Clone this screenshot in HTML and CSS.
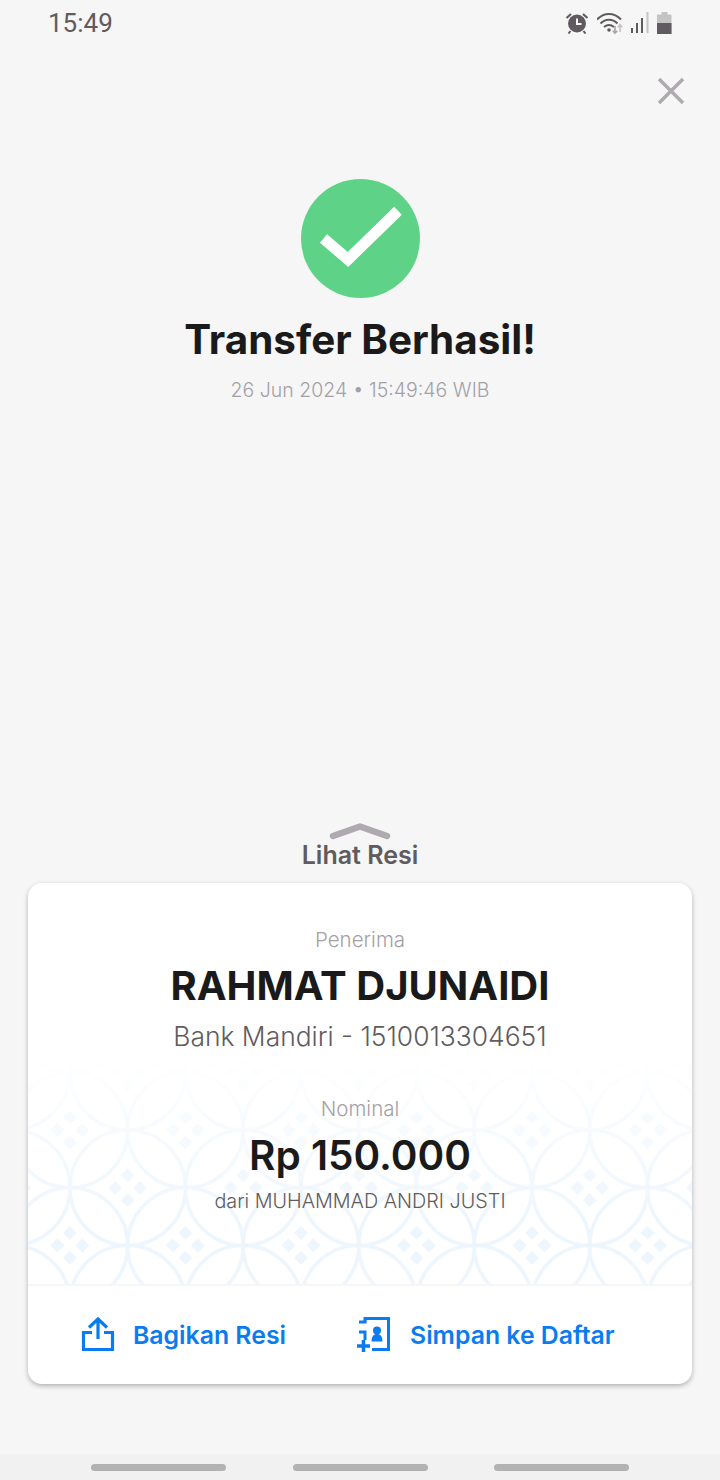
FILE: index.html
```html
<!DOCTYPE html>
<html lang="id">
<head>
  <meta charset="UTF-8">
  <meta name="viewport" content="width=device-width, initial-scale=1.0">
  <title>Transfer Berhasil</title>
  <link rel="stylesheet" href="styles.css">
</head>
<body>
  <div class="phone">
    <!-- Status bar -->
    <div class="status-bar">
      <span class="clock">15:49</span>
      <div class="status-icons">
        <svg class="icon-alarm" width="24" height="22" viewBox="0 0 24 22">
          <circle cx="12" cy="11.500" r="9" fill="#5f5b5e"/>
          <path d="M12 6.500v5.500h4.500" fill="none" stroke="#f6f6f6" stroke-width="2"/>
          <path d="M1.500 6 6 2M22.500 6 18 2M5.500 19l-2 2.500M18.500 19l2 2.500" fill="none" stroke="#5f5b5e" stroke-width="2"/>
        </svg>
        <svg class="icon-wifi" width="26" height="22" viewBox="0 0 26 22">
          <path d="M0 7.500C7 0 17 0 24 7.500M3.500 11.500c5-5 12-5 17 0M7 15c3-2.500 7-2.500 10 0" fill="none" stroke="#5f5b5e" stroke-width="2"/>
          <circle cx="12" cy="18" r="1.800" fill="#5f5b5e"/>
          <path d="M18 14v7M15.800 18.800l2.200 2.400 2.200-2.400" fill="none" stroke="#a6a6a6" stroke-width="1.600"/>
          <path d="M23 20v-7M20.800 15.200l2.200-2.400 2.200 2.400" fill="none" stroke="#c4c4c4" stroke-width="1.600"/>
        </svg>
        <svg class="icon-signal" width="18" height="21" viewBox="0 0 18 21">
          <rect x="0" y="16" width="2" height="5" fill="#5f5b5e"/>
          <rect x="5" y="11" width="2" height="10" fill="#5f5b5e"/>
          <rect x="10" y="6" width="2" height="15" fill="#5f5b5e"/>
          <rect x="15.500" y="0" width="2" height="21" fill="#c4c4c4"/>
        </svg>
        <svg class="icon-battery" width="15" height="22" viewBox="0 0 15 22">
          <path d="M4.500 0h6v2.500h3a1 1 0 0 1 1 1V22H0V3.500a1 1 0 0 1 1-1h3.500z" fill="#c4c4c4"/>
          <rect x="0" y="11" width="14.500" height="11" fill="#5f5b5e"/>
        </svg>
      </div>
    </div>

    <div class="close-row">
      <svg width="30" height="30" viewBox="0 0 30 30">
        <path d="M3 3l24 24M27 3 3 27" fill="none" stroke="#aeaab0" stroke-width="3.500"/>
      </svg>
    </div>

    <!-- Status transfer -->
    <div class="hero">
      <div class="check-circle">
        <svg width="119" height="119" viewBox="0 0 119 119">
          <path d="M22.500 59.500 47 80.500 97 31.700" fill="none" stroke="#fff" stroke-width="11"/>
        </svg>
      </div>
      <h1 class="hero-title">Transfer Berhasil!</h1>
      <p class="hero-date">26 Jun 2024 • 15:49:46 WIB</p>
    </div>

    <!-- Resi -->
    <div class="sheet">
      <div class="sheet-handle">
        <svg width="62" height="18" viewBox="0 0 62 18">
          <path d="M4 13 31 3.500 58 13" fill="none" stroke="#aeaab0" stroke-width="6.500" stroke-linecap="round" stroke-linejoin="round"/>
        </svg>
        <span class="handle-label">Lihat Resi</span>
      </div>

      <div class="card">
        <div class="card-body">
          <svg class="batik" width="664" height="230">
            <defs>
              <pattern id="kawung" width="116" height="116" patternUnits="userSpaceOnUse" patternTransform="translate(13 47) scale(0.996)">
                <g fill="none" stroke="#edf5fd" stroke-width="3.500">
                  <circle cx="29" cy="29" r="58"/>
                  <circle cx="145" cy="29" r="58"/>
                  <circle cx="29" cy="145" r="58"/>
                  <circle cx="145" cy="145" r="58"/>
                  <circle cx="87" cy="87" r="58"/>
                  <circle cx="-29" cy="87" r="58"/>
                  <circle cx="87" cy="-29" r="58"/>
                  <circle cx="-29" cy="-29" r="58"/>
                </g>
                <g fill="#edf5fd">
                  <path d="M29 9.500l7 7-7 7-7-7z"/>
                  <path d="M29 34.500l7 7-7 7-7-7z"/>
                  <path d="M16.500 22l7 7-7 7-7-7z"/>
                  <path d="M41.500 22l7 7-7 7-7-7z"/>
                  <path d="M87 67.500l7 7-7 7-7-7z"/>
                  <path d="M87 92.500l7 7-7 7-7-7z"/>
                  <path d="M74.500 80l7 7-7 7-7-7z"/>
                  <path d="M99.500 80l7 7-7 7-7-7z"/>
                </g>
              </pattern>
            </defs>
            <rect width="664" height="230" fill="url(#kawung)"/>
          </svg>

          <div class="info-block">
            <p class="info-label">Penerima</p>
            <p class="info-name">RAHMAT DJUNAIDI</p>
            <p class="info-bank">Bank Mandiri - 1510013304651</p>
          </div>
          <div class="info-block info-amount">
            <p class="info-label">Nominal</p>
            <p class="info-value">Rp 150.000</p>
            <p class="info-from">dari MUHAMMAD ANDRI JUSTI</p>
          </div>
        </div>

        <div class="card-actions">
          <button class="action action-share" type="button">
            <svg width="34" height="36" viewBox="0 0 34 36">
              <path d="M17 22V3M8 10.500 17 2l9 8.500" fill="none" stroke="#0a7cf0" stroke-width="3.200"/>
              <path d="M11 15.500H2.500V32.500H31.500V15.500H23" fill="none" stroke="#0a7cf0" stroke-width="3.200"/>
            </svg>
            Bagikan Resi
          </button>
          <button class="action action-save" type="button">
            <svg width="36" height="36" viewBox="0 0 36 36">
              <path d="M8 5V1.500H31.500V32.500H15" fill="none" stroke="#0a7cf0" stroke-width="3"/>
              <path d="M2 5H9.500M2 15H9.500M8 15V23" fill="none" stroke="#0a7cf0" stroke-width="3"/>
              <path d="M0 29H13M6.500 23V35" fill="none" stroke="#0a7cf0" stroke-width="3.500"/>
              <circle cx="20" cy="13.500" r="4" fill="#0a7cf0"/>
              <path d="M14.500 24.500c0-5 2-7.500 5.500-7.500s5.500 2.500 5.500 7.500z" fill="#0a7cf0"/>
            </svg>
            Simpan ke Daftar
          </button>
        </div>
      </div>
    </div>

    <!-- Navigasi bawah -->
    <div class="nav-bar">
      <span class="nav-pill"></span>
      <span class="nav-pill"></span>
      <span class="nav-pill"></span>
    </div>
  </div>
</body>
</html>
```

FILE: styles.css
```css
* {
  box-sizing: border-box;
}

body {
  margin: 0;
  font-family: Inter, "Noto Sans", sans-serif;
  background-color: #f6f6f6;
  color: #1a1a1a;
}

p, h1 {
  margin: 0;
}

.phone {
  display: flex;
  flex-direction: column;
  height: 1480px;
  overflow: hidden;
}

/* Status bar */
.status-bar {
  display: flex;
  justify-content: space-between;
  align-items: center;
  height: 44px;
  padding: 1px 48px 0 48px;
}

.clock {
  font-family: Roboto, sans-serif;
  font-size: 26px;
  color: #5f5b5e;
}

.status-icons {
  display: flex;
  align-items: center;
  gap: 8px;
}

.close-row {
  display: flex;
  justify-content: flex-end;
  padding: 32px 34px 0 0;
}

/* Hero */
.hero {
  display: flex;
  flex-direction: column;
  align-items: center;
  margin-top: 73px;
}

.check-circle {
  width: 119px;
  height: 119px;
  border-radius: 50%;
  background-color: #5ed387;
}

.check-circle svg {
  display: block;
}

.hero-title {
  margin-top: 17px;
  font-size: 40.400px;
  line-height: 50px;
  font-weight: 700;
}

.hero-date {
  margin-top: 12px;
  font-size: 19.500px;
  line-height: 26px;
  font-weight: 300;
  color: #a4a0a6;
}

/* Sheet */
.sheet {
  margin-top: auto;
  padding: 0 28px;
}

.sheet-handle {
  display: flex;
  flex-direction: column;
  align-items: center;
}

.handle-label {
  font-size: 25px;
  line-height: 30px;
  font-weight: 600;
  color: #5f5b5e;
  margin-top: -1px;
}

.card {
  margin-top: 13px;
  background-color: #fff;
  border-radius: 14px;
  box-shadow: 0 2px 5px rgba(0, 0, 0, 0.28);
  overflow: hidden;
}

.card-body {
  position: relative;
  height: 401px;
  padding-top: 44px;
  text-align: center;
}

.batik {
  position: absolute;
  left: 0;
  bottom: 0;
  -webkit-mask-image: linear-gradient(to bottom, transparent 0, #000 170px);
  mask-image: linear-gradient(to bottom, transparent 0, #000 170px);
}

.info-block {
  position: relative;
}

.info-amount {
  margin-top: 43px;
}

.info-label {
  font-size: 20.500px;
  line-height: 26px;
  font-weight: 300;
  color: #a4a0a6;
}

.info-name {
  margin-top: 8px;
  font-size: 40px;
  line-height: 50px;
  font-weight: 700;
}

.info-bank {
  margin-top: 8px;
  font-size: 26.400px;
  line-height: 34px;
  font-weight: 300;
  color: #5f5b5e;
}

.info-value {
  margin-top: 9px;
  font-size: 40.500px;
  line-height: 50px;
  font-weight: 600;
}

.info-from {
  margin-top: 7px;
  font-size: 19.800px;
  line-height: 26px;
  font-weight: 300;
  color: #5f5b5e;
}

.card-actions {
  display: flex;
  align-items: center;
  height: 100px;
  padding: 0 53px;
  border-top: 2px solid #f6f6f6;
}

.action {
  display: flex;
  align-items: center;
  padding: 0;
  border: none;
  background: none;
  font-family: inherit;
  font-size: 24.800px;
  font-weight: 600;
  color: #0a7cf0;
}

.action-share {
  gap: 18px;
}

.action-save {
  gap: 17px;
  margin-left: 71px;
}

/* Navigasi bawah */
.nav-bar {
  display: flex;
  justify-content: space-between;
  align-items: center;
  height: 26px;
  margin-top: 70px;
  padding: 0 91px;
  background-color: #f1f1f1;
}

.nav-pill {
  width: 135px;
  height: 7px;
  border-radius: 4px;
  background-color: #b2b2b2;
}
```
